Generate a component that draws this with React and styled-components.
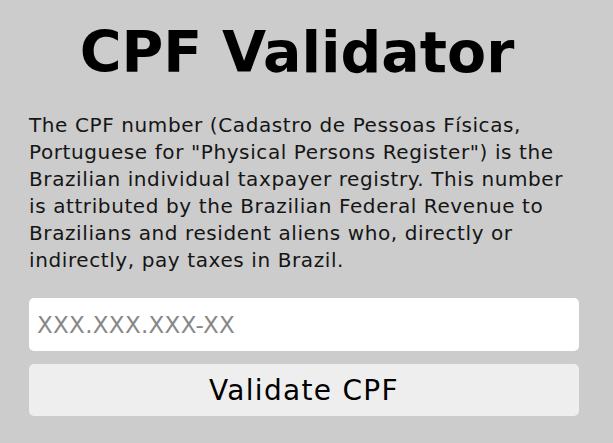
import React from 'react';
import styled, { createGlobalStyle } from 'styled-components';

const GlobalStyle = createGlobalStyle`
    html, body {
        margin: 0;
        padding: 0;
        background: #cccccc;
    }
    body {
        font-family: "DejaVu Sans", "Open Sans", sans-serif;
        color: #111;
    }
`

const App = () => {
    return (
        <>
            <GlobalStyle />
            <Page>
                <Title>CPF Validator</Title>
                <Text>
                    The CPF number (Cadastro de Pessoas Físicas, Portuguese for "Physical Persons Register") is the
                    Brazilian individual taxpayer registry. This number is attributed by the Brazilian Federal Revenue
                    to Brazilians and resident aliens who, directly or indirectly, pay taxes in Brazil.
                </Text>
                <Form onSubmit={e => e.preventDefault()}>
                    <Input type='text' placeholder='XXX.XXX.XXX-XX' />
                    <Button type='submit'>Validate CPF</Button>
                </Form>
            </Page>
        </>
    );
};

export default App;

const Page = styled.main`
    width: 550px;
    padding: 16px 34px 0 29px;
`

const Title = styled.h1`
    margin: 0;
    padding-right: 14px;
    text-align: center;
    font-size: 57px;
    font-weight: 700;
    line-height: 72px;
    color: #000;
`

const Text = styled.p`
    margin: 24px 0 0;
    font-size: 20px;
    letter-spacing: 0.6px;
    line-height: 27px;
    color: #151515;
`

const Form = styled.form`
    margin-top: 24px;
    display: flex;
    flex-direction: column;
    gap: 13px;
`

const Input = styled.input`
    box-sizing: border-box;
    height: 53px;
    width: 100%;
    border: none;
    border-radius: 5px;
    background: #fff;
    padding: 0 8px;
    font-family: inherit;
    font-size: 23px;
    letter-spacing: 0.3px;
    outline: none;
    &::placeholder{
        color: #888888;
    }
`

const Button = styled.button`
    box-sizing: border-box;
    height: 52px;
    width: 100%;
    border: none;
    border-radius: 5px;
    background: #eeeeee;
    font-family: inherit;
    font-size: 28px;
    letter-spacing: 1.3px;
    color: #000;
    cursor: pointer;
`
